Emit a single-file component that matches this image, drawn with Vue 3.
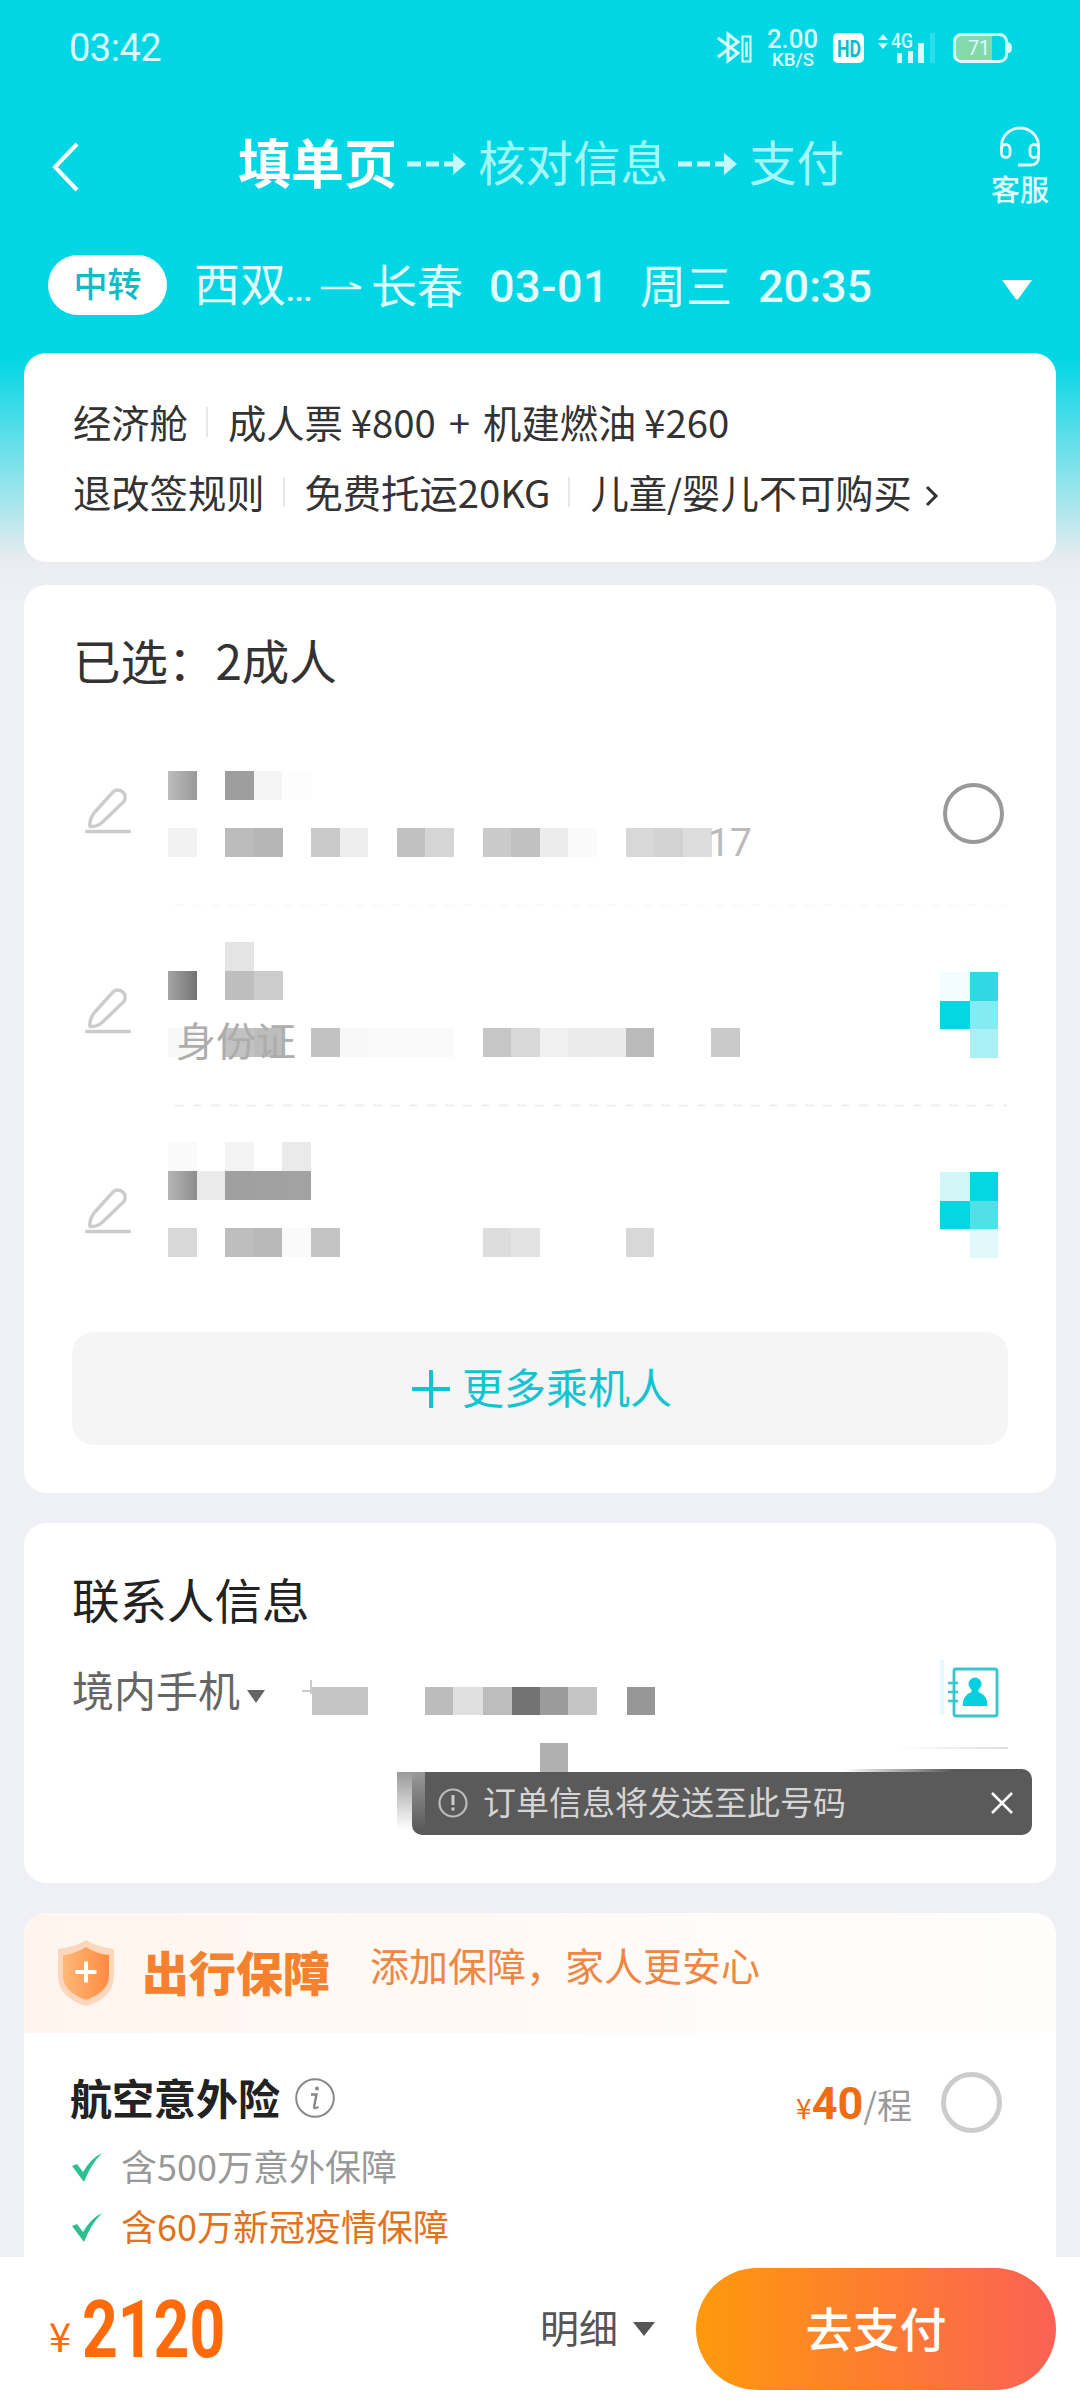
<template>
  <div class="page">
    <header class="head">
      <!-- Status bar -->
      <div class="status">
        <span class="clock">03:42</span>
        <svg class="status-icons" width="300" height="44" viewBox="714 26 300 44">
          <g fill="none" stroke="#d9fdff" stroke-width="3">
            <path d="M718 38l20 15-10 8V34l10 8-20 15" />
            <rect x="742.500" y="36.500" width="8" height="25" stroke-width="2" />
            <path d="M746.500 42v15" stroke-width="2.500" />
          </g>
          <g fill="#d9fdff">
            <text x="767" y="48" font-size="25" font-weight="500" textLength="51" lengthAdjust="spacingAndGlyphs">2.00</text>
            <text x="772" y="66" font-size="19" font-weight="500" textLength="42" lengthAdjust="spacingAndGlyphs">KB/S</text>
            <rect x="833" y="33" width="31" height="30" rx="5" fill="#fff" />
            <text x="837" y="56.500" font-size="23" font-weight="700" fill="#10bccb" textLength="24" lengthAdjust="spacingAndGlyphs">HD</text>
            <path d="M878 40l5-6 5 6zM878 43l5 6 5-6z" />
            <text x="891" y="48" font-size="20" font-weight="500" textLength="22" lengthAdjust="spacingAndGlyphs">4G</text>
            <path d="M897 53h5v10h-5zM908 51h5v12h-5zM918 43h6v20h-6z" />
            <path d="M930 33h5v30h-5z" opacity=".2" />
          </g>
          <path d="M959 35h33v26h-33q-5 0-5-6V41q0-6 5-6z" fill="#84d9ab" />
          <rect x="954.500" y="34.500" width="52" height="27" rx="7" fill="none" stroke="#d9fdff" stroke-width="3" />
          <path d="M1008 42q4 1 4 6t-4 5z" fill="#d9fdff" />
          <text x="968" y="55" font-size="21" fill="#d9fdff" textLength="22" lengthAdjust="spacingAndGlyphs">71</text>
        </svg>
      </div>

      <!-- Order steps -->
      <nav class="nav">
        <svg class="back" width="30" height="54" viewBox="0 0 30 54"><path d="M27 4L5 27l22 23" fill="none" stroke="#fff" stroke-width="4" /></svg>
        <div class="steps">
          <b>填单页</b>
          <svg class="step-arrow" width="60" height="24" viewBox="0 0 60 24"><path d="M0 12h14M19 12h13M37 12h12" stroke="#c4fafb" stroke-width="5" /><path d="M46 1l13 11-13 11z" fill="#c4fafb" /></svg>
          <span>核对信息</span>
          <svg class="step-arrow" width="60" height="24" viewBox="0 0 60 24"><path d="M0 12h14M19 12h13M37 12h12" stroke="#c4fafb" stroke-width="5" /><path d="M46 1l13 11-13 11z" fill="#c4fafb" /></svg>
          <span>支付</span>
        </div>
        <div class="service">
          <svg width="42" height="42" viewBox="0 0 42 42" fill="none" stroke="#e2feff" stroke-width="2.800">
            <path d="M2.500 24v-4a18.500 18 0 0 1 37 0v11q0 8-8 8H19" />
            <rect x="2.500" y="18.500" width="8.500" height="13" rx="4" />
            <rect x="31" y="18.500" width="8.500" height="13" rx="4" />
          </svg>
          <span>客服</span>
        </div>
      </nav>

      <!-- Trip summary -->
      <div class="trip">
        <span class="badge">中转</span>
        <span class="city">西双<i>...</i></span>
        <svg class="to" width="42" height="14" viewBox="0 0 42 14"><path d="M0 8h40L29 3" fill="none" stroke="#e2feff" stroke-width="2.500" /></svg>
        <span class="city2">长春</span>
        <span class="num date">03-01</span>
        <span class="week">周三</span>
        <span class="num time">20:35</span>
        <svg class="drop" width="32" height="20" viewBox="0 0 32 20"><path d="M1 0h30L18 18q-2 3-4 0z" fill="#fff" /></svg>
      </div>
    </header>

    <!-- Fare -->
    <section class="card fare">
      <div class="fare-row"><span>经济舱</span><i class="bar" /><span class="price-line">成人票<em>¥800</em><u>+</u>机建燃油<em>¥260</em></span></div>
      <div class="fare-row">
        <span>退改签规则</span><i class="bar" /><span>免费托运20KG</span><i class="bar" /><span>儿童/婴儿不可购买</span>
        <svg class="more" width="14" height="24" viewBox="0 0 14 24"><path d="M2 3l9 9-9 9" fill="none" stroke="#333" stroke-width="3" /></svg>
      </div>
    </section>

    <!-- Passengers -->
    <section class="card people">
      <h2>已选：2成人</h2>
      <div v-for="(p, i) in passengers" :key="i" class="person">
        <svg class="pencil" width="48" height="50" viewBox="0 0 48 50" fill="none" stroke="#ccc" stroke-width="3.400">
          <path d="M27.500 5.500Q32 1 37 4.500t2 10L17 35.500Q12 40 5 39.500 4 33 9 26z" stroke-linejoin="round" />
          <path d="M1.500 44.500h43" stroke-linecap="round" />
        </svg>
        <svg class="mosaic" width="780" height="200" viewBox="160 0 780 200">
          <defs>
            <linearGradient id="fade"><stop offset="0" stop-color="#fff" stop-opacity=".35" /><stop offset="1" stop-color="#fff" stop-opacity="0" /></linearGradient>
          </defs>
          <g shape-rendering="crispEdges">
            <rect v-for="(b, k) in p.blocks" :key="k" :x="168 + b[0] * 28.600" :y="rowY[b[1]]" width="28.700" height="29" :fill="b[2]" />
            <rect x="168" :y="rowY[1]" width="28.600" height="29" fill="url(#fade)" />
          </g>
          <text v-for="t in p.texts" :key="t.s" :x="t.x" y="127" :font-size="t.size" :fill="t.c">{{ t.s }}</text>
          <path v-if="p.line" d="M175 176.500h832" :stroke="p.line" stroke-width="2" stroke-dasharray="9 9" />
        </svg>
        <span v-if="!p.check" class="radio" />
        <svg v-else class="check" width="60" height="88" viewBox="0 0 60 88" shape-rendering="crispEdges">
          <rect v-for="(c, k) in p.check" :key="k" :x="k % 2 ? 30 : 0" :y="Math.floor(k / 2) * 28.500" :width="k % 2 ? 28 : 30" height="28.500" :fill="c" />
        </svg>
      </div>
      <button class="add">
        <svg width="38" height="38" viewBox="0 0 38 38"><path d="M0 19h38M19 0v38" stroke="#12c3d0" stroke-width="4" /></svg>
        <span>更多乘机人</span>
      </button>
    </section>

    <!-- Contact -->
    <section class="card contact">
      <h2>联系人信息</h2>
      <div class="phone">
        <span class="region">境内手机</span>
        <svg class="caret" width="18" height="13" viewBox="0 0 18 13"><path d="M0 0h18L9 13z" fill="#666" /></svg>
        <svg class="digits" width="380" height="60" viewBox="300 1660 380 60">
          <path d="M302 1691h12M311 1680v14" stroke="#ccc" stroke-width="2" />
          <g shape-rendering="crispEdges">
            <rect v-for="b in phoneBlocks" :key="b[0]" :x="b[0]" y="1687" :width="b[1]" height="28" :fill="b[2]" />
          </g>
        </svg>
        <svg class="book" width="60" height="60" viewBox="940 1660 60 60">
          <path d="M940 1660h4v55h-4z" fill="#e4f9fb" />
          <rect x="954" y="1669" width="43" height="47" rx="2" fill="none" stroke="#38c5cd" stroke-width="2.800" />
          <path d="M948 1683h10M948 1692h10M948 1701h10" stroke="#38c5cd" stroke-width="2.500" />
          <circle cx="975" cy="1684" r="6.500" fill="#06d0dd" />
          <path d="M971.500 1688h7v4q9 3 9 14h-25q0-11 9-14z" fill="#06d0dd" />
        </svg>
      </div>
      <i class="rule" />
      <div class="toast">
        <i class="blot" />
        <i class="smear" />
        <svg class="warn" width="30" height="30" viewBox="0 0 30 30"><circle cx="15" cy="15" r="13.500" fill="none" stroke="#bbb" stroke-width="2.200" /><path d="M15 7v10M15 19.500v3" stroke="#ccc" stroke-width="3" /></svg>
        <span>订单信息将发送至此号码</span>
        <svg class="close" width="22" height="22" viewBox="0 0 22 22"><path d="M1 1l20 20M21 1L1 21" stroke="#fff" stroke-width="2.500" /></svg>
      </div>
    </section>

    <!-- Insurance -->
    <section class="card cover">
      <div class="cover-head">
        <svg width="58" height="68" viewBox="0 0 58 68">
          <defs>
            <linearGradient id="shield"><stop offset="0" stop-color="#ffb877" /><stop offset="1" stop-color="#ff8b42" /></linearGradient>
          </defs>
          <path d="M29 1Q42 9 57 10v28Q56 59 29 67 2 59 1 38V10Q16 9 29 1z" fill="#fdd7bc" />
          <path d="M29 8q11 7 23 8v22q-1 15-23 23Q7 53 6 38V16q12-1 23-8z" fill="url(#shield)" />
          <path d="M18.500 33h21M29 22.500v21" stroke="#fff" stroke-width="4" />
        </svg>
        <b>出行保障</b>
        <span>添加保障，家人更安心</span>
      </div>
      <div class="plan">
        <b>航空意外险</b>
        <svg class="info" width="42" height="42" viewBox="0 0 42 42" fill="none" stroke="#888">
          <circle cx="21" cy="21" r="18.800" stroke-width="2" />
          <path d="M17 17.500h5.500l-2.500 12.500q0 2 4.500 0" stroke-width="2.400" />
          <circle cx="23" cy="11.500" r="2" fill="#888" stroke="none" />
        </svg>
        <span class="price"><small>¥</small><strong>40</strong><span>/程</span></span>
        <span class="radio light" />
      </div>
      <div v-for="perk in perks" :key="perk.text" class="perk" :class="{ hot: perk.hot }">
        <svg width="31" height="31" viewBox="0 0 31 31"><path d="M0 14l5-2 6 8Q19 6 30 1 19 12 12 30z" fill="#2dc08e" /></svg>
        <span>{{ perk.text }}</span>
      </div>
    </section>

    <!-- Pay bar -->
    <footer class="pay">
      <span class="yen">¥</span>
      <span class="total">2120</span>
      <span class="detail">明细</span>
      <svg class="detail-caret" width="22" height="14" viewBox="0 0 22 14"><path d="M0 0h22L11 14z" fill="#555" /></svg>
      <button class="go">去支付</button>
    </footer>
  </div>
</template>

<script setup>
// Mosaic lines inside a 200px passenger row: above the name, name, id number
const rowY = [13, 42, 99]

// blocks: [column, line, colour]
const passengers = [
  {
    blocks: [
      [0, 1, '#999'], [2, 1, '#9e9e9e'], [3, 1, '#f5f5f5'], [4, 1, '#fdfdfd'],
      [0, 2, '#f2f2f2'], [2, 2, '#bcbcbc'], [3, 2, '#b6b6b6'], [5, 2, '#c9c9c9'], [6, 2, '#eee'],
      [8, 2, '#c1c1c1'], [9, 2, '#d5d5d5'], [11, 2, '#cacaca'], [12, 2, '#c1c1c1'], [13, 2, '#ececec'],
      [14, 2, '#fafafa'], [16, 2, '#d8d8d8'], [17, 2, '#d2d2d2'], [18, 2, '#ddd']
    ],
    texts: [{ s: '17', x: 708, size: 39, c: '#bbb' }],
    line: '#f9f9f9'
  },
  {
    blocks: [
      [2, 0, '#e4e4e4'], [0, 1, '#747474'], [2, 1, '#bebebe'], [3, 1, '#ccc'],
      [0, 2, '#f8f8f8'], [2, 2, '#c2c2c2'], [3, 2, '#bcbcbc'], [5, 2, '#c2c2c2'], [6, 2, '#f8f8f8'],
      [7, 2, '#fafafa'], [8, 2, '#fafafa'], [9, 2, '#fafafa'], [11, 2, '#c6c6c6'], [12, 2, '#d8d8d8'],
      [13, 2, '#f1f1f1'], [14, 2, '#eaeaea'], [15, 2, '#ebebeb'], [16, 2, '#bababa'], [19, 2, '#cacaca']
    ],
    texts: [{ s: '身份证', x: 176, size: 40, c: '#adadad' }],
    line: '#efefef',
    check: ['#f3fdff', '#30d8e3', '#06d5e2', '#84ebf2', '#fff', '#a9eff3']
  },
  {
    blocks: [
      [0, 0, '#fafafa'], [2, 0, '#f4f4f4'], [4, 0, '#eaeaea'],
      [0, 1, '#8e8e8e'], [1, 1, '#eaeaea'], [2, 1, '#a0a0a0'], [3, 1, '#a1a1a1'], [4, 1, '#a2a2a2'],
      [0, 2, '#d8d8d8'], [2, 2, '#bebebe'], [3, 2, '#b9b9b9'], [4, 2, '#fafafa'], [5, 2, '#c4c4c4'],
      [11, 2, '#ddd'], [12, 2, '#e3e3e3'], [16, 2, '#d8d8d8']
    ],
    texts: [],
    check: ['#d3f7f9', '#06d5e2', '#06d5e2', '#52e0e8', '#fff', '#e2f9fb']
  }
]

const phoneBlocks = [
  [312, 56, '#c5c5c5'], [425, 28, '#bcbcbc'], [453, 30, '#e0e0e0'], [483, 29, '#bdbdbd'],
  [512, 28, '#737373'], [540, 28, '#9b9b9b'], [568, 29, '#c5c5c5'], [627, 28, '#979797']
]

const perks = [
  { text: '含500万意外保障', hot: false },
  { text: '含60万新冠疫情保障', hot: true }
]
</script>

<style>
body {
  background: #eff0f5;
}
</style>

<style scoped>
.page {
  display: flex;
  flex-direction: column;
  width: 1080px;
  height: 2400px;
  overflow: hidden;
  background: linear-gradient(#00d6e4 0, #00d6e4 356px, #ebecf1 562px, #eff0f5 600px);
  font-family: 'Noto Sans CJK SC', sans-serif;
  line-height: 1;
  color: #333;
  white-space: nowrap;
}
.page * {
  box-sizing: border-box;
}
svg {
  display: block;
  flex: none;
}
svg text {
  font-family: Roboto, 'Noto Sans CJK SC', sans-serif;
}
i,
em {
  font-style: normal;
}
button {
  border: 0;
  padding: 0;
  font: inherit;
}

/* Header */
.status {
  display: flex;
  align-items: center;
  justify-content: space-between;
  height: 96px;
  padding: 0 66px 0 69px;
}
.clock {
  font: 400 38px/1 Roboto, sans-serif;
  color: #d9fdff;
  letter-spacing: -0.5px;
}
.nav {
  display: flex;
  align-items: center;
  height: 142px;
  padding: 0 31px 0 50px;
}
.steps {
  display: flex;
  align-items: center;
  margin: -12px 0 0 158px;
  font-size: 47.500px;
  color: #a5f8fa;
}
.steps b {
  font-size: 53px;
  color: #fff;
}
.step-arrow {
  margin: 5px 11px 0 10px;
}
.service {
  display: flex;
  flex-direction: column;
  align-items: center;
  gap: 6px;
  margin: -5px 0 0 auto;
  font-size: 29px;
  font-weight: 500;
  color: #e2feff;
}
.trip {
  display: flex;
  align-items: center;
  height: 93px;
  padding: 0 47px 0 48px;
  font-size: 46px;
  color: #e2feff;
}
.badge {
  width: 119px;
  height: 60px;
  border-radius: 30px;
  background: #fff;
  color: #12bac8;
  font-size: 34px;
  font-weight: 500;
  line-height: 56px;
  text-align: center;
}
.city {
  width: 120px;
  margin: -4px 0 0 27px;
}
.city i {
  font: 700 30px Roboto, sans-serif;
}
.to {
  margin: 4px 8px 0 7px;
}
.city2,
.week {
  margin-top: -4px;
}
.city2 {
  width: 118px;
}
.num {
  font: 500 45px/1 Roboto, sans-serif;
  padding-top: 4px;
}
.date {
  width: 151px;
  letter-spacing: 0.5px;
}
.week {
  width: 118px;
}
.drop {
  margin: 11px 0 0 auto;
}

/* Cards */
.card {
  flex: none;
  width: 1032px;
  margin: 0 auto;
  border-radius: 22px;
  background: #fff;
}
h2 {
  margin: 0;
  font-size: 47.500px;
  font-weight: 400;
  line-height: 1;
}
.fare {
  height: 209px;
  margin-top: 22px;
  padding: 34px 49px;
  font-size: 38.300px;
}
.fare-row {
  display: flex;
  align-items: center;
  height: 70px;
}
.bar {
  width: 2px;
  height: 30px;
  margin: 0 20px 0 18px;
  background: #e8e8e8;
}
.price-line em {
  margin-left: 8px;
}
.price-line u {
  margin: 0 13px;
  text-decoration: none;
}
.more {
  margin: 8px 0 0 13px;
}

.people {
  display: flex;
  flex-direction: column;
  height: 908px;
  margin-top: 23px;
  padding: 51px 48px 0;
}
.people h2 {
  height: 93px;
  padding-left: 1px;
}
.person {
  display: flex;
  height: 200px;
}
.pencil {
  margin: 58px 0 0 13px;
}
.mosaic {
  margin: 0 0 0 27px;
  overflow: visible;
}
.radio {
  flex: none;
  width: 61px;
  height: 61px;
  margin: 54px 0 0 3px;
  border: 4px solid #999;
  border-radius: 50%;
}
.check {
  margin: 43px 0 0;
}
.add {
  display: flex;
  align-items: center;
  justify-content: center;
  gap: 12px;
  height: 113px;
  margin-top: 3px;
  padding-left: 4px;
  border-radius: 22px;
  background: #f5f5f5;
  color: #12c3d0;
  font-size: 42px;
}
.add span {
  margin-top: -6px;
}

.contact {
  height: 360px;
  margin-top: 30px;
  padding: 52px 24px 0 48px;
}
.contact h2 {
  height: 85px;
  color: #222;
}
.phone {
  display: flex;
  height: 60px;
  color: #666;
  font-size: 42px;
}
.region {
  padding-top: 8px;
}
.caret {
  margin: 30px 0 0 7px;
}
.digits {
  margin-left: 35px;
}
.book {
  margin-left: 260px;
}
.rule {
  display: block;
  width: 110px;
  height: 2px;
  margin: 27px 0 0 826px;
  background: linear-gradient(90deg, #fff, #dedede);
}
/* Order notice under the phone field */
.toast {
  position: relative;
  display: flex;
  align-items: center;
  width: 620px;
  height: 66px;
  margin: 20px 0 0 340px;
  border-radius: 10px;
  background: #5a5a5a;
  color: #d5d5d5;
  font-size: 33px;
}
.toast::before {
  content: '';
  position: absolute;
  left: 0;
  top: 0;
  width: 540px;
  height: 3px;
  background: linear-gradient(90deg, #fff 80%, rgba(255, 255, 255, 0));
}
.toast span {
  margin-top: -2px;
}
.toast .warn {
  margin: 2px 15px 0 26px;
}
.close {
  margin: 2px 19px 0 auto;
}
.blot {
  position: absolute;
  left: 128px;
  top: -26px;
  width: 28px;
  height: 29px;
  background: #b0b0b0;
}
.smear {
  position: absolute;
  left: -15px;
  top: 3px;
  width: 28px;
  height: 58px;
  background: linear-gradient(#999, rgba(150, 150, 150, 0));
}

.cover {
  height: 400px;
  margin-top: 30px;
  overflow: hidden;
}
.cover-head {
  display: flex;
  height: 120px;
  padding: 26px 33px 0;
  background: linear-gradient(90deg, #fff5ee, #fffefd);
  color: #ee8742;
}
.cover-head b {
  margin: 8px 0 0 27px;
  color: #f5812f;
  font-size: 47px;
  font-weight: 900;
}
.cover-head span {
  margin: 6px 0 0 40px;
  font-size: 39px;
}
.plan {
  display: flex;
  align-items: center;
  height: 136px;
  padding: 0 54px 4px 46px;
}
.plan b {
  margin-top: -4px;
  color: #222;
  font-size: 42px;
}
.info {
  margin: -2px 0 0 14px;
}
.price {
  display: flex;
  align-items: baseline;
  margin: 8px 0 0 auto;
  color: #ef6c10;
}
.price small {
  font-size: 28px;
}
.price strong {
  font: 700 45px/1 Roboto, sans-serif;
}
.price span {
  color: #999;
  font-size: 35px;
}
.plan .light {
  width: 61px;
  height: 61px;
  margin: 6px 0 0 29px;
  border: 5px solid #ccc;
}
.perk {
  display: flex;
  align-items: center;
  gap: 18px;
  height: 60px;
  margin-top: -33px;
  padding: 0 48px;
  color: #999;
  font-size: 36px;
}
.perk span {
  margin-top: -3px;
}
.perk svg {
  margin-top: 3px;
}
.perk.hot {
  margin-top: 0;
  color: #e0731c;
}

/* Pay bar */
.pay {
  position: absolute;
  top: 2257px;
  left: 0;
  display: flex;
  align-items: center;
  width: 1080px;
  height: 143px;
  background: #fff;
  color: #ff6a0a;
}
.yen {
  width: 33px;
  margin: 12px 0 0 49px;
  font-size: 40px;
}
.total {
  width: 458px;
  margin-top: 2px;
  font: 700 80px/1 Roboto, sans-serif;
  transform: scaleX(0.78);
  transform-origin: left;
}
.detail {
  margin-top: -5px;
  color: #555;
  font-size: 39px;
}
.detail-caret {
  margin-left: 15px;
}
.go {
  width: 360px;
  height: 122px;
  margin: 0 24px 0 auto;
  padding-bottom: 4px;
  border-radius: 61px;
  background: linear-gradient(90deg, #ff990c, #fb6155);
  color: #fff;
  font-size: 47px;
  font-weight: 500;
}
</style>
